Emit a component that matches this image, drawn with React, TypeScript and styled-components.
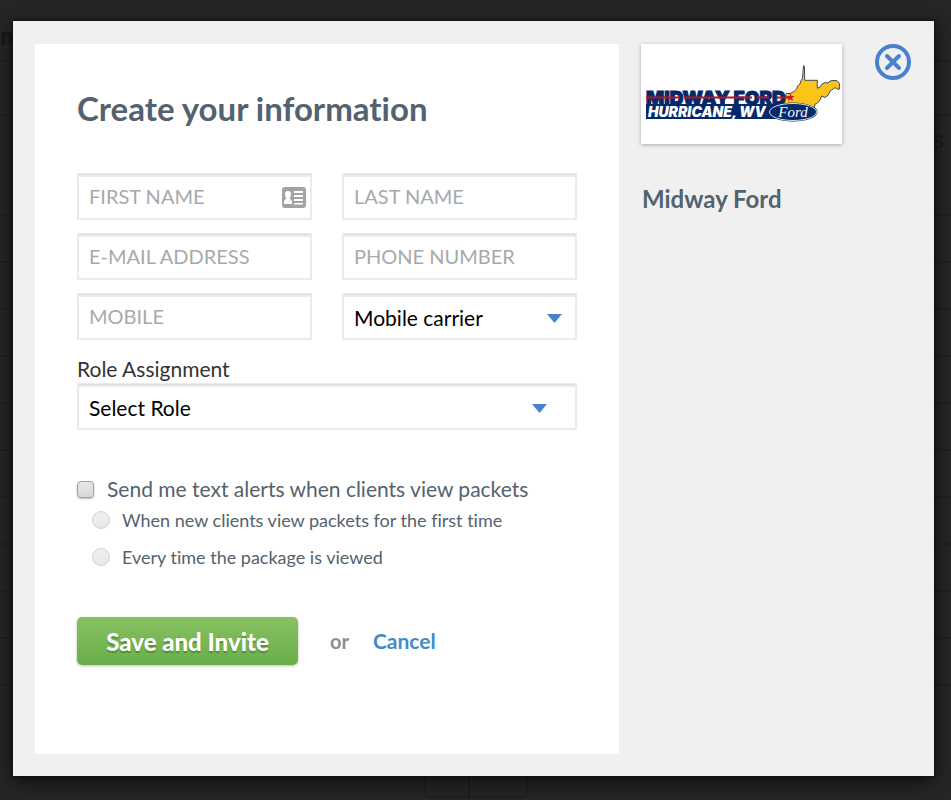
import React from "react";
import styled, { createGlobalStyle, css } from "styled-components";

const GlobalStyle = createGlobalStyle`
  *, *::before, *::after { box-sizing: border-box; }
  html, body { margin: 0; }
  body {
    background: #262626;
    font-family: Lato, "Open Sans", sans-serif;
    font-variant-ligatures: none;
    color: #53626e;
  }
  button, input, select { font: inherit; }
`;

const Screen = styled.div`
  position: relative;
  min-height: 100vh;
  overflow: hidden;
  padding: 21px 17px 24px 13px;
`;

const Backdrop = styled.div`
  position: absolute;
  inset: 0;
  overflow: hidden;
  display: flex;
  flex-direction: column;
  background: #262626;
`;

const BackdropBar = styled.div<{ $height: number }>`
  flex: none;
  height: ${(p) => p.$height}px;
  display: flex;
  align-items: flex-start;
  justify-content: space-between;
  border-bottom: 2px solid #202020;
  color: #171717;
  font-family: "Liberation Sans", sans-serif;
`;

const BackdropHeading = styled.span`
  padding-top: 22px;
  font-size: 24px;
  line-height: 30px;
  font-weight: 700;
  color: #14171a;
`;

const BackdropColumn = styled.span`
  padding: 10px 7px 0 0;
  font-size: 24px;
  line-height: 28px;
`;

const BackdropPager = styled.div`
  flex: none;
  display: grid;
  grid-template-columns: 42px 1fr;
  width: 104px;
  height: 34px;
  margin: 78px auto 0;
  border: 2px solid #1f1f1f;
  border-radius: 5px;

  span + span { border-left: 2px solid #1d1d1d; }
`;

const Modal = styled.section`
  position: relative;
  display: grid;
  grid-template-columns: minmax(0, 584fr) minmax(0, 271fr);
  gap: 22px;
  padding: 23px 22px 22px;
  background: #f0f0f0;
  box-shadow: 0 5px 18px #0c0c0c, 0 0 2px 1px #151515;
`;

const Panel = styled.form`
  padding: 41px 42px 89px;
  background: #fff;
`;

const Title = styled.h1`
  margin: 0 0 41px;
  font-size: 33px;
  line-height: 47px;
  font-weight: 700;
  color: #53626e;
`;

const Fields = styled.div`
  display: grid;
  grid-template-columns: 1fr 1fr;
  gap: 13px 30px;
`;

const FieldBox = styled.div`
  position: relative;
`;

const control = css`
  display: block;
  width: 100%;
  height: 47px;
  margin: 0;
  padding: 0 10px;
  border: 2px solid #ebebeb;
  border-top-width: 1px;
  border-radius: 0;
  background: #fff;
  box-shadow: inset 0 1px #dcdcdc, inset 0 3px #ebebeb;
  outline: none;
`;

const TextInput = styled.input`
  ${control}
  font-size: 20px;
  color: #000;

  &::placeholder { color: #a5aaad; opacity: 1; }
`;

const Select = styled.select`
  ${control}
  appearance: none;
  padding-top: 2px;
  font-size: 21px;
  color: #000;
`;

const FieldIcon = styled.svg`
  position: absolute;
  top: 14px;
  right: 6px;
`;

const Arrow = styled.svg<{ $inset: number }>`
  position: absolute;
  top: 21px;
  right: ${(p) => p.$inset}px;
  pointer-events: none;
`;

const RoleLabel = styled.label`
  display: block;
  padding: 15px 0 1px;
  font-size: 21px;
  line-height: 27px;
  color: #333;
`;

const Alerts = styled.fieldset`
  margin: 44px 0 0;
  padding: 0;
  border: 0;
`;

const CheckRow = styled.label`
  display: flex;
  align-items: center;
  gap: 13px;
  font-size: 21px;
  line-height: 30px;
`;

const RadioRow = styled.label`
  display: flex;
  align-items: center;
  gap: 12px;
  padding-left: 15px;
  font-size: 18px;
  line-height: 32px;

  & + & { margin-top: 5px; }
`;

const Checkbox = styled.input`
  appearance: none;
  flex: none;
  width: 17px;
  height: 17px;
  margin: 0;
  border: 1px solid #a0a0a0;
  border-radius: 4px;
  background: linear-gradient(#e8e8e8, #d8d8d8);
  box-shadow: 0 1px 2px #bbb;
`;

const Radio = styled.input`
  appearance: none;
  flex: none;
  width: 18px;
  height: 18px;
  margin: 0;
  border: 1px solid #d2d2d2;
  border-radius: 50%;
  background: linear-gradient(#efefef, #e8e8e8);
`;

const Actions = styled.div`
  display: flex;
  align-items: center;
  margin-top: 44px;
`;

const SaveButton = styled.button`
  width: 221px;
  height: 48px;
  padding: 0;
  border: 0;
  border-radius: 5px;
  background: linear-gradient(#87c162, #69ae49);
  box-shadow: 0 1px 3px #bbb;
  color: #fff;
  font-size: 24px;
  font-weight: 900;
  text-shadow: 0 2px 1px #548c3a;
`;

const Or = styled.span`
  margin: 0 24px 0 32px;
  font-size: 20px;
  line-height: 26px;
  font-weight: 700;
  color: #8c8f91;
`;

const Cancel = styled.a`
  font-size: 21px;
  line-height: 26px;
  font-weight: 700;
  color: #428bca;
  text-decoration: none;
`;

const Side = styled.aside`
  min-width: 0;
`;

const SideTop = styled.div`
  display: flex;
  align-items: flex-start;
  justify-content: space-between;
`;

const LogoCard = styled.div`
  height: 100px;
  background: #fff;
  box-shadow: 0 1px 4px #aaa;

  svg { display: block; }
`;

const CloseButton = styled.button`
  width: 38px;
  height: 38px;
  padding: 0;
  border: 0;
  background: none;

  svg { display: block; }
`;

const DealerName = styled.h2`
  margin: 40px 0 0 1px;
  font-size: 24px;
  line-height: 30px;
  font-weight: 700;
`;

const DealerLogo = () => (
  <svg width="201" height="100" viewBox="0 0 201 100" role="img" aria-label="Midway Ford, Hurricane, WV">
    <path
      d="M162.500 21.500 L163.500 23 L163.700 36.300 H176.300 V44.300 L179 43 L181 40 L184.300 38.500 L187 39 L189 37 L193 36.500 L196 36.700 L198.500 39.500 L198.300 45.300 L196 45 L194 43.500 L190.700 46 L189 47 L187.300 51 L184 53.500 L180.700 52 L179 56 L176 59.500 L174 60 L173 67 L145 66 L142 60 L143.500 54 L145.700 49.300 L149 49.500 L153 47.500 L155.700 45 L156.500 42 L159 40 L160 36.500 L161.500 34.300 Z"
      fill="#fcc419"
      stroke="#3d4c61"
      strokeWidth="1"
      strokeLinejoin="round"
    />
    <rect x="5" y="60" width="134" height="15" fill="#04296a" />
    <text x="5" y="61" fontFamily="Inter, sans-serif" fontWeight="900" fontSize="19" fill="#04296a" stroke="#04296a" strokeWidth="1">
      MIDWAY FORD
    </text>
    <path d="M5 53.500 H38 M43 53.500 H111 M116 53.500 H128 M136 53.500 H150" stroke="#b5152b" strokeWidth="2" />
    <path d="M149.500 49 L150.500 52 H153.500 L151.200 54 L152.200 57 L149.500 55.200 L146.800 57 L147.800 54 L145.500 52 H148.500 Z" fill="#c9182c" />
    <text x="7" y="73" fontFamily="Inter, sans-serif" fontWeight="900" fontStyle="italic" fontSize="14" fill="#fff">
      HURRICANE, WV
    </text>
    <ellipse cx="152" cy="68" rx="24.500" ry="9.500" fill="#04296a" />
    <ellipse cx="152" cy="68" rx="23.500" ry="8.500" fill="none" stroke="#d8e0ec" strokeWidth="1" />
    <text x="152" y="73" textAnchor="middle" fontFamily="Liberation Serif, serif" fontWeight="400" fontStyle="italic" fontSize="15" fill="#fff">
      Ford
    </text>
  </svg>
);

const ContactIcon = () => (
  <FieldIcon width="24" height="21" viewBox="0 0 24 21" aria-hidden="true">
    <rect width="24" height="21" rx="3" fill="#a3a3a3" />
    <path
      d="M2 17 V15 Q2 12.500 4.500 11.500 Q3 10 3 7 Q3 4 6 4 Q9 4 9 7 Q9 10 7.500 11.500 Q10 12.500 10 15 V17 Z M12 4 H21 V6 H12 Z M12 8 H21 V10 H12 Z M12 12 H21 V14 H12 Z M12 16 H21 V17.500 H12 Z"
      fill="#fff"
    />
  </FieldIcon>
);

const DropArrow = ({ inset }: { inset: number }) => (
  <Arrow $inset={inset} width="15" height="9" viewBox="0 0 15 9" aria-hidden="true">
    <path d="M0 0 H15 L7.500 9 Z" fill="#4a80cd" />
  </Arrow>
);

const rows = Array.from({ length: 10 }, (_, i) => i);

export default function App() {
  return (
    <>
      <GlobalStyle />
      <Screen>
        <Backdrop aria-hidden="true">
          <BackdropBar $height={62}>
            <BackdropHeading>m</BackdropHeading>
          </BackdropBar>
          <BackdropBar $height={54} />
          <BackdropBar $height={100}>
            <span />
            <BackdropColumn>s</BackdropColumn>
          </BackdropBar>
          {rows.map((row) => (
            <BackdropBar key={row} $height={47} />
          ))}
          <BackdropPager>
            <span />
            <span />
          </BackdropPager>
        </Backdrop>

        <Modal role="dialog" aria-labelledby="dialog-title">
          <Panel onSubmit={(e: React.FormEvent) => e.preventDefault()}>
            <Title id="dialog-title">Create your information</Title>
            <Fields>
              <FieldBox>
                <TextInput aria-label="First name" placeholder="FIRST NAME" />
                <ContactIcon />
              </FieldBox>
              <TextInput aria-label="Last name" placeholder="LAST NAME" />
              <TextInput type="email" aria-label="E-mail address" placeholder="E-MAIL ADDRESS" />
              <TextInput type="tel" aria-label="Phone number" placeholder="PHONE NUMBER" />
              <TextInput type="tel" aria-label="Mobile" placeholder="MOBILE" />
              <FieldBox>
                <Select aria-label="Mobile carrier">
                  <option>Mobile carrier</option>
                </Select>
                <DropArrow inset={15} />
              </FieldBox>
            </Fields>
            <RoleLabel htmlFor="role">Role Assignment</RoleLabel>
            <FieldBox>
              <Select id="role">
                <option>Select Role</option>
              </Select>
              <DropArrow inset={30} />
            </FieldBox>
            <Alerts>
              <CheckRow>
                <Checkbox type="checkbox" />
                Send me text alerts when clients view packets
              </CheckRow>
              <RadioRow>
                <Radio type="radio" name="alerts" />
                When new clients view packets for the first time
              </RadioRow>
              <RadioRow>
                <Radio type="radio" name="alerts" />
                Every time the package is viewed
              </RadioRow>
            </Alerts>
            <Actions>
              <SaveButton type="submit">Save and Invite</SaveButton>
              <Or>or</Or>
              <Cancel href="#">Cancel</Cancel>
            </Actions>
          </Panel>
          <Side>
            <SideTop>
              <LogoCard>
                <DealerLogo />
              </LogoCard>
              <CloseButton type="button" aria-label="Close">
                <svg width="38" height="38" viewBox="0 0 38 38" fill="none" stroke="#4a80cd">
                  <circle cx="19" cy="18" r="16" strokeWidth="4" />
                  <path d="M13 12 L25 24 M25 12 L13 24" strokeWidth="4" strokeLinecap="round" />
                </svg>
              </CloseButton>
            </SideTop>
            <DealerName>Midway Ford</DealerName>
          </Side>
        </Modal>
      </Screen>
    </>
  );
}
